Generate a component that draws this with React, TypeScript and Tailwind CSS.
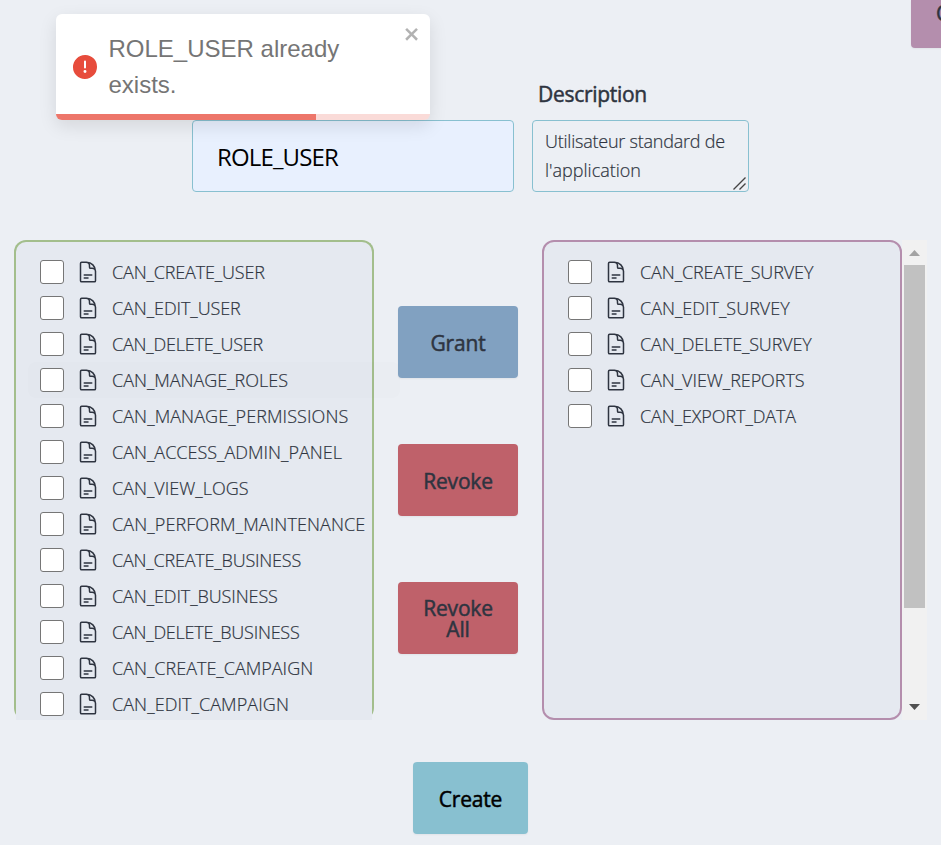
import type { ReactNode } from "react";

type Permission = { name: string; tracking: string; hovered?: boolean };

const available: Permission[] = [
  { name: "CAN_CREATE_USER", tracking: "tracking-[-0.16px]" },
  { name: "CAN_EDIT_USER", tracking: "tracking-[-0.08px]" },
  { name: "CAN_DELETE_USER", tracking: "tracking-[-0.22px]" },
  { name: "CAN_MANAGE_ROLES", tracking: "tracking-[-0.02px]", hovered: true },
  { name: "CAN_MANAGE_PERMISSIONS", tracking: "tracking-[0.07px]" },
  { name: "CAN_ACCESS_ADMIN_PANEL", tracking: "tracking-[0px]" },
  { name: "CAN_VIEW_LOGS", tracking: "tracking-[0px]" },
  { name: "CAN_PERFORM_MAINTENANCE", tracking: "tracking-[0.1px]" },
  { name: "CAN_CREATE_BUSINESS", tracking: "tracking-[-0.2px]" },
  { name: "CAN_EDIT_BUSINESS", tracking: "tracking-[-0.1px]" },
  { name: "CAN_DELETE_BUSINESS", tracking: "tracking-[-0.24px]" },
  { name: "CAN_CREATE_CAMPAIGN", tracking: "tracking-[0px]" },
  { name: "CAN_EDIT_CAMPAIGN", tracking: "tracking-[0.07px]" },
];

const granted: Permission[] = [
  { name: "CAN_CREATE_SURVEY", tracking: "tracking-[-0.1px]" },
  { name: "CAN_EDIT_SURVEY", tracking: "tracking-[0px]" },
  { name: "CAN_DELETE_SURVEY", tracking: "tracking-[-0.16px]" },
  { name: "CAN_VIEW_REPORTS", tracking: "tracking-[-0.06px]" },
  { name: "CAN_EXPORT_DATA", tracking: "tracking-[-0.1px]" },
];

function DocumentIcon() {
  return (
    <svg className="size-6 shrink-0" viewBox="0 0 24 24" fill="none" stroke="currentColor" strokeWidth="1.5" strokeLinecap="round" strokeLinejoin="round">
      <path d="M19.5 14.25v-2.625a3.375 3.375 0 0 0-3.375-3.375h-1.5A1.125 1.125 0 0 1 13.5 7.125v-1.5a3.375 3.375 0 0 0-3.375-3.375H8.25m0 12.75h7.5m-7.5 3H12M10.5 2.25H5.625c-.621 0-1.125.504-1.125 1.125v17.25c0 .621.504 1.125 1.125 1.125h12.75c.621 0 1.125-.504 1.125-1.125V11.25a9 9 0 0 0-9-9Z" />
    </svg>
  );
}

function PermissionRow({ item }: { item: Permission }) {
  return (
    <li className={item.hovered ? "flex h-9 w-[372px] items-center rounded-lg bg-[#2e3440]/[0.012] pl-3" : "flex h-9 items-center pl-3"}>
      <span className="size-6 shrink-0 rounded-[3px] border-[1.5px] border-[#767676] bg-white" />
      <span className="ml-3 flex">
        <DocumentIcon />
      </span>
      <span className={`ml-3 text-[18px] leading-9 font-light whitespace-nowrap [-webkit-text-stroke:0.2px_currentColor] ${item.tracking}`}>{item.name}</span>
    </li>
  );
}

function ActionButton({ className, children }: { className: string; children: ReactNode }) {
  return (
    <button className={`flex h-[72px] items-center justify-center rounded-[4px] pt-[2px] text-center text-[21px] leading-[21px] tracking-[-0.2px] shadow-xs [-webkit-text-stroke:0.5px_currentColor] ${className}`}>
      {children}
    </button>
  );
}

function Toast() {
  return (
    <div className="absolute top-[14px] left-[56px] flex h-[106px] w-[374px] overflow-hidden rounded-[6px] bg-white pl-[17px] font-['Liberation_Sans',sans-serif] text-[#757575] shadow-[0_6px_18px_rgba(0,0,0,0.1)]">
      <svg className="mt-[41px] size-6 shrink-0" viewBox="0 0 24 24" fill="#e74c3c">
        <path d="M11.983 0a12.206 12.206 0 0 0-8.51 3.653A11.8 11.8 0 0 0 0 12.207 11.779 11.779 0 0 0 11.8 24h.214A12.111 12.111 0 0 0 24 11.791 11.766 11.766 0 0 0 11.983 0ZM10.5 16.542a1.476 1.476 0 0 1 1.449-1.53h.027a1.527 1.527 0 0 1 1.523 1.47 1.475 1.475 0 0 1-1.449 1.53h-.027a1.529 1.529 0 0 1-1.523-1.47ZM11 12.5v-6a1 1 0 0 1 2 0v6a1 1 0 1 1-2 0Z" />
      </svg>
      <p className="mt-[17px] ml-[11.500px] w-[260px] text-[24px] leading-9">ROLE_USER already exists.</p>
      <svg className="absolute top-[9.500px] left-[348px] h-[20px] w-[17px]" viewBox="0 0 14 16" fill="#000000" fillOpacity="0.3">
        <path fillRule="evenodd" d="M7.71 8.23l3.75 3.75-1.48 1.48-3.75-3.75-3.75 3.75L1 11.98l3.75-3.75L1 4.48 2.48 3l3.75 3.75L9.98 3l1.48 1.48-3.75 3.75z" />
      </svg>
      <div className="absolute bottom-0 left-0 h-[6px] w-full bg-[#e74c3c]/20">
        <div className="h-full w-[260.3px] bg-[#e74c3c]/70" />
      </div>
    </div>
  );
}

export default function App() {
  return (
    <div className="relative h-[845px] w-[941px] overflow-hidden bg-[#eceff4] font-['Open_Sans','Noto_Sans',sans-serif] text-[#2e3440]">
      <div className="flex h-12 justify-end">
        <button className="h-12 w-[30px] overflow-hidden rounded-bl-[4px] bg-[#b48ead] pb-[22px] pl-[25px] text-left text-[21px] leading-[26px] shadow-xs [-webkit-text-stroke:0.5px_currentColor]">Create</button>
      </div>

      <div className="flex h-36 items-end gap-[18px] pl-[192px]">
        <div className="flex h-[72px] w-[322px] items-center rounded-[4px] border border-[#88c0d0] bg-[#e8f0fe] pt-[2px] pl-6 text-[24px] tracking-[-0.85px] text-black">
          ROLE_USER
        </div>
        <div className="flex w-[217px] flex-col">
          <label className="mb-[10px] pl-[6px] text-[21px] leading-8 tracking-[-0.3px] [-webkit-text-stroke:0.5px_currentColor]">Description</label>
          <div className="relative h-[72px] rounded-[4px] border border-[#88c0d0] pt-[6px] pl-3 text-[18px] leading-[29px] font-light whitespace-nowrap [-webkit-text-stroke:0.2px_currentColor]">
            <span className="tracking-[-0.23px]">Utilisateur standard de</span>
            <br />
            <span className="tracking-[0px]">l'application</span>
            <svg className="absolute right-[2px] bottom-[1px] size-[13px]" viewBox="0 0 13 13" stroke="#444" strokeWidth="1.4">
              <path d="M.5 12.5l12-12M6.500 12.500l6-6" />
            </svg>
          </div>
        </div>
      </div>

      <div className="mt-12 flex h-[480px] pl-[14px]">
        <div className="h-[480px] w-[360px] rounded-xl border-2 border-b-0 border-[#a3be8c] bg-[#e5e9f0]">
          <div className="h-3" />
          <ul className="h-[466px] bg-[#e5e9f0] pl-3">
            {available.map((item) => (
              <PermissionRow key={item.name} item={item} />
            ))}
          </ul>
        </div>
        <div className="mx-6 flex w-[120px] flex-col justify-center gap-[66px]">
          <ActionButton className="bg-[#81a1c1]">Grant</ActionButton>
          <ActionButton className="bg-[#bf616a]">Revoke</ActionButton>
          <ActionButton className="bg-[#bf616a]">
            Revoke
            <br />
            All
          </ActionButton>
        </div>
        <ul className="h-[480px] w-[360px] rounded-xl border-2 border-[#b48ead] bg-[#e5e9f0] pt-3 pl-3">
          {granted.map((item) => (
            <PermissionRow key={item.name} item={item} />
          ))}
        </ul>
        <div className="flex w-[25px] flex-col items-center bg-[#f1f1f1]">
          <svg className="h-[25px] w-[21px]" viewBox="0 0 21 25" fill="#a3a3a3">
            <path d="M5 16l5.500-6 5.500 6z" />
          </svg>
          <div className="h-[343px] w-[21px] bg-[#c1c1c1]" />
          <svg className="mt-auto h-[25px] w-[21px]" viewBox="0 0 21 25" fill="#505050">
            <path d="M5 9l5.500 6 5.500-6z" />
          </svg>
        </div>
      </div>

      <div className="mt-[42px] flex pl-[413px]">
        <ActionButton className="w-[115px] bg-[#88c0d0] text-black">Create</ActionButton>
      </div>

      <Toast />
    </div>
  );
}
